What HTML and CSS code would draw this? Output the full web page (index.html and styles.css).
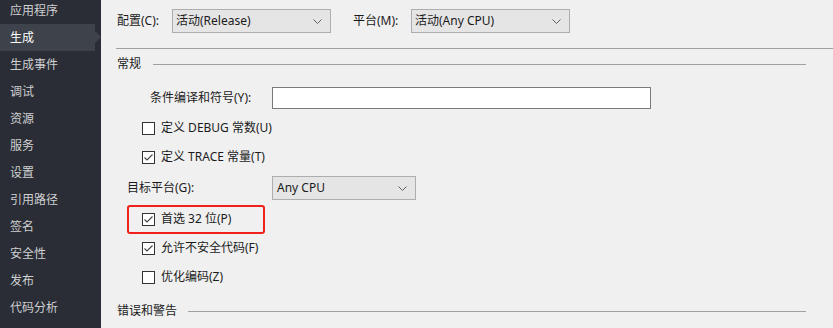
FILE: index.html
```html
<!DOCTYPE html>
<html lang="zh-CN">
<head>
<meta charset="utf-8">
<title>生成</title>
<link rel="stylesheet" href="styles.css">
</head>
<body>
<div class="app">
  <nav class="side">
    <div class="item">应用程序</div>
    <div class="item active">生成</div>
    <div class="item">生成事件</div>
    <div class="item">调试</div>
    <div class="item">资源</div>
    <div class="item">服务</div>
    <div class="item">设置</div>
    <div class="item">引用路径</div>
    <div class="item">签名</div>
    <div class="item">安全性</div>
    <div class="item">发布</div>
    <div class="item">代码分析</div>
  </nav>
  <main class="main">
    <div class="toprow">
      <span class="lbl lbl-config">配置(C):</span>
      <div class="select select-top"><span>活动(Release)</span><svg class="chev" width="9" height="5" viewBox="0 0 9 5"><path d="M0.5 0.5 L4.5 4.5 L8.5 0.5" fill="none" stroke="#606060" stroke-width="1"/></svg></div>
      <span class="lbl lbl-platform">平台(M):</span>
      <div class="select select-top"><span>活动(Any CPU)</span><svg class="chev" width="9" height="5" viewBox="0 0 9 5"><path d="M0.5 0.5 L4.5 4.5 L8.5 0.5" fill="none" stroke="#606060" stroke-width="1"/></svg></div>
    </div>
    <div class="rule"></div>
    <div class="group-head"><span>常规</span><div class="line"></div></div>
    <div class="form">
      <div class="row row-input">
        <span class="lbl lbl-symbols">条件编译和符号(Y):</span>
        <div class="textbox"></div>
      </div>
      <div class="row row-check">
        <span class="box"></span><span>定义 DEBUG 常数(U)</span>
      </div>
      <div class="row row-check">
        <span class="box"><svg width="11" height="11" viewBox="0 0 11 11"><path d="M1.5 5.5 L4 8 L9.5 2.5" fill="none" stroke="#444" stroke-width="1.1"/></svg></span><span>定义 TRACE 常量(T)</span>
      </div>
      <div class="row row-target">
        <span class="lbl lbl-target">目标平台(G):</span>
        <div class="select select-target"><span>Any CPU</span><svg class="chev" width="9" height="5" viewBox="0 0 9 5"><path d="M0.5 0.5 L4.5 4.5 L8.5 0.5" fill="none" stroke="#606060" stroke-width="1"/></svg></div>
      </div>
      <div class="row row-check highlighted">
        <span class="box"><svg width="11" height="11" viewBox="0 0 11 11"><path d="M1.5 5.5 L4 8 L9.5 2.5" fill="none" stroke="#444" stroke-width="1.1"/></svg></span><span>首选 32 位(P)</span>
      </div>
      <div class="row row-check">
        <span class="box"><svg width="11" height="11" viewBox="0 0 11 11"><path d="M1.5 5.5 L4 8 L9.5 2.5" fill="none" stroke="#444" stroke-width="1.1"/></svg></span><span>允许不安全代码(F)</span>
      </div>
      <div class="row row-check">
        <span class="box"></span><span>优化编码(Z)</span>
      </div>
    </div>
    <div class="group-head group-err"><span>错误和警告</span><div class="line"></div></div>
  </main>
</div>
</body>
</html>
```
FILE: styles.css
```css
html, body {
  margin: 0;
  padding: 0;
  width: 833px;
  height: 328px;
  overflow: hidden;
  background: #f0f0f0;
  font-family: "Noto Sans", "Noto Sans CJK SC", sans-serif;
  font-size: 12px;
  line-height: 16px;
  color: #1b1b1b;
}

.app {
  display: flex;
  height: 328px;
}

.side {
  width: 101px;
  flex: 0 0 101px;
  background: #2a2d35;
  margin-top: -3px;
  height: 331px;
}

.item {
  height: 27px;
  line-height: 27px;
  padding-left: 10px;
  color: #cfd0d2;
  position: relative;
  width: 85px;
}

.item.active {
  background: #3e424a;
  color: #ffffff;
}

.item.active::after {
  content: "";
  position: absolute;
  right: -6px;
  top: 7px;
  border-style: solid;
  border-width: 6px 0 6px 6px;
  border-color: transparent transparent transparent #3e424a;
}

.main {
  flex: 1;
  padding-left: 16px;
  padding-top: 9px;
  display: flex;
  flex-direction: column;
}

.toprow {
  display: flex;
  align-items: center;
  height: 24px;
}

.lbl {
  white-space: nowrap;
}

.lbl-config { width: 55px; }
.lbl-platform { width: 58px; margin-left: 22px; }

.select {
  box-sizing: border-box;
  border: 1px solid #adadad;
  background: #e5e5e5;
  display: flex;
  align-items: center;
  justify-content: space-between;
  padding: 0 8px 0 3px;
  height: 24px;
}

.select-top { width: 159px; }

.chev { display: block; }

.rule {
  height: 1px;
  background: #a0a0a0;
  margin-top: 15px;
  margin-left: -1px;
}

.group-head {
  display: flex;
  align-items: center;
  height: 16px;
  margin-top: 7px;
  margin-right: 27px;
}

.group-head .line {
  flex: 1;
  height: 1px;
  background: #a0a0a0;
  margin-left: 12px;
}

.group-err {
  margin-top: 16px;
}

.group-err .line { margin-left: 11px; }

.form {
  display: flex;
  flex-direction: column;
  gap: 9px;
  margin-top: 15px;
}

.row {
  display: flex;
  align-items: center;
  position: relative;
}

.row-input {
  padding-left: 33px;
  height: 22px;
}

.lbl-symbols { width: 122px; }

.textbox {
  box-sizing: border-box;
  width: 379px;
  height: 22px;
  background: #ffffff;
  border: 1px solid #7a7a7a;
}

.row-check {
  padding-left: 25px;
  height: 20px;
}

.box {
  box-sizing: border-box;
  width: 13px;
  height: 13px;
  border: 1px solid #333333;
  background: #ffffff;
  margin-right: 6px;
  display: flex;
  align-items: center;
  justify-content: center;
}

.box svg { display: block; }

.row-target {
  padding-left: 10px;
  height: 24px;
}

.lbl-target { width: 145px; }

.select-target {
  width: 144px;
  padding-left: 4px;
}

.highlighted::before {
  content: "";
  position: absolute;
  left: 10px;
  top: -4px;
  width: 138px;
  height: 29px;
  box-sizing: border-box;
  border: 2px solid #f0201c;
  border-radius: 3px;
}
```
